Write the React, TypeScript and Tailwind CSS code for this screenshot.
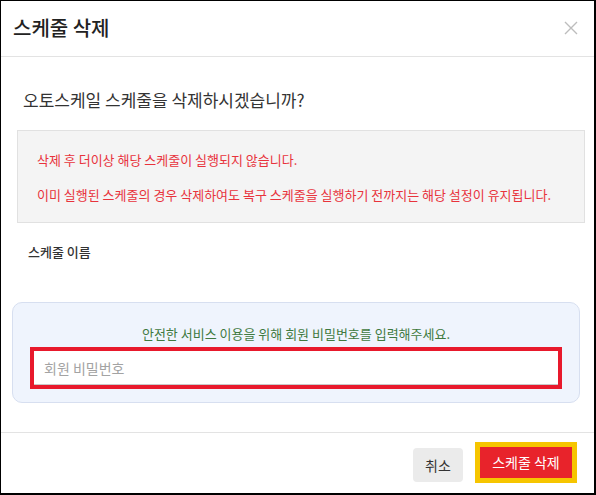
import React from "react";

const FONT = { fontFamily: '"Noto Sans CJK KR", "Noto Sans", sans-serif' };

function CloseIcon() {
  return (
    <svg width="14" height="14" viewBox="0 0 14 14" fill="none">
      <path d="M1 1L13 13M13 1L1 13" stroke="#bdbdbd" strokeWidth="1.4" />
    </svg>
  );
}

export default function App() {
  return (
    <div
      className="w-[596px] h-[495px] bg-white border-black border-l border-t border-r-2 border-b-2 flex flex-col text-[#333]"
      style={FONT}
    >
      {/* Header */}
      <div className="h-[56px] shrink-0 border-b border-[#e3e3e3] flex items-center justify-between pl-3 pr-[16px]">
        <h2 className="text-[20px] font-medium text-[#222] leading-none -mt-[1px]">스케줄 삭제</h2>
        <button className="w-[14px] h-[14px] -mt-[1px]">
          <CloseIcon />
        </button>
      </div>

      {/* Body */}
      <div className="flex-1 flex flex-col">
        <p className="mt-[29px] ml-[22px] text-[17px] leading-[28px] text-[#333]">
          오토스케일 스케줄을 삭제하시겠습니까?
        </p>

        <div className="mt-[16px] ml-[16px] w-[568px] h-[93px] bg-[#f4f4f4] border border-[#e1e1e1] pl-[19px] pt-[19px] flex flex-col gap-[15px] text-[13px] leading-[20px] text-[#e8333c]">
          <p>삭제 후 더이상 해당 스케줄이 실행되지 않습니다.</p>
          <p>이미 실행된 스케줄의 경우 삭제하여도 복구 스케줄을 실행하기 전까지는 해당 설정이 유지됩니다.</p>
        </div>

        <p className="mt-[19px] ml-[27px] text-[13px] leading-[20px] font-medium text-[#333]">
          스케줄 이름
        </p>

        <div className="mt-[40px] ml-[11px] w-[568px] rounded-[10px] border border-[#d7dff0] bg-[#eff4fd] px-[16px] pt-[21px] pb-[13px] flex flex-col items-center">
          <p className="text-[13px] leading-[20px] text-[#3f7a3f]">
            안전한 서비스 이용을 위해 회원 비밀번호를 입력해주세요.
          </p>
          <div className="mt-[3px] w-[532px] h-[42px] border-4 border-[#e8192c] bg-white">
            <input
              type="password"
              placeholder="회원 비밀번호"
              className="w-full h-full px-[10px] border-b border-[#c9c9c9] text-[14px] outline-none placeholder:text-[#a3a3a3]"
              style={FONT}
            />
          </div>
        </div>
      </div>

      {/* Footer */}
      <div className="h-[61px] shrink-0 border-t border-[#e3e3e3] flex items-end justify-end gap-[12px] pr-[17px] pb-[10px]">
        <button className="mb-[1px] w-[50px] h-[34px] rounded-[4px] bg-[#ebebeb] text-[14px] text-[#333]">
          취소
        </button>
        <button className="w-[102px] h-[41px] border-[5px] border-[#f6c500] bg-[#e8232b] text-[14px] text-white">
          스케줄 삭제
        </button>
      </div>
    </div>
  );
}
